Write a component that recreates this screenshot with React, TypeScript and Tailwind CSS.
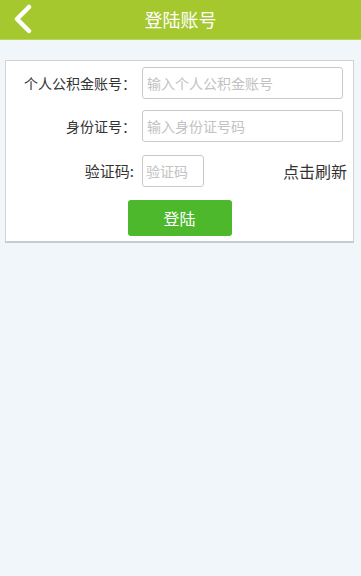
const font = {
  fontFamily: '"Noto Sans CJK SC", "Noto Sans", sans-serif',
};

function BackIcon() {
  return (
    <svg width="22" height="30" viewBox="0 0 22 30" fill="none">
      <path
        d="M17 3 L5 15 L17 27"
        stroke="white"
        strokeWidth="4.5"
        strokeLinecap="round"
        strokeLinejoin="round"
      />
    </svg>
  );
}

export default function App() {
  return (
    <div
      className="min-h-[576px] w-[361px] bg-[#f1f6fa] text-[#333]"
      style={font}
    >
      <header className="relative flex h-[40px] items-center justify-center bg-[#a5c82f] border-b border-[#b9d65a]">
        <button className="absolute left-[12px] top-[4px]">
          <BackIcon />
        </button>
        <h1 className="text-[18px] text-white">登陆账号</h1>
      </header>

      <div className="mx-[5px] mt-[20px] w-[349px] border border-[#cfd3d6] border-b-2 border-b-[#c8ccd0] bg-white pb-[5px] pt-[6px]">
        <div className="flex items-center">
          <label className="w-[130px] text-right text-[14px]">个人公积金账号：</label>
          <input
            className="ml-[6px] h-[32px] w-[201px] rounded-[3px] border border-[#c9c9c9] px-[4px] text-[14px] outline-none placeholder:text-[#c2c2c2]"
            placeholder="输入个人公积金账号"
          />
        </div>
        <div className="mt-[11px] flex items-center">
          <label className="w-[130px] text-right text-[14px]">身份证号：</label>
          <input
            className="ml-[6px] h-[32px] w-[201px] rounded-[3px] border border-[#c9c9c9] px-[4px] text-[14px] outline-none placeholder:text-[#c2c2c2]"
            placeholder="输入身份证号码"
          />
        </div>
        <div className="mt-[13px] flex items-center">
          <label className="w-[128px] text-right text-[15px]">验证码:</label>
          <input
            className="ml-[8px] h-[32px] w-[62px] rounded-[3px] border border-[#c9c9c9] px-[3px] text-[14px] outline-none placeholder:text-[#c2c2c2]"
            placeholder="验证码"
          />
          <span className="ml-auto mr-[6px] text-[16px] text-[#333]">点击刷新</span>
        </div>
        <div className="mt-[13px] flex justify-center">
          <button className="h-[36px] w-[104px] rounded-[3px] bg-[#4db82b] text-[16px] text-white">
            登陆
          </button>
        </div>
      </div>
    </div>
  );
}
